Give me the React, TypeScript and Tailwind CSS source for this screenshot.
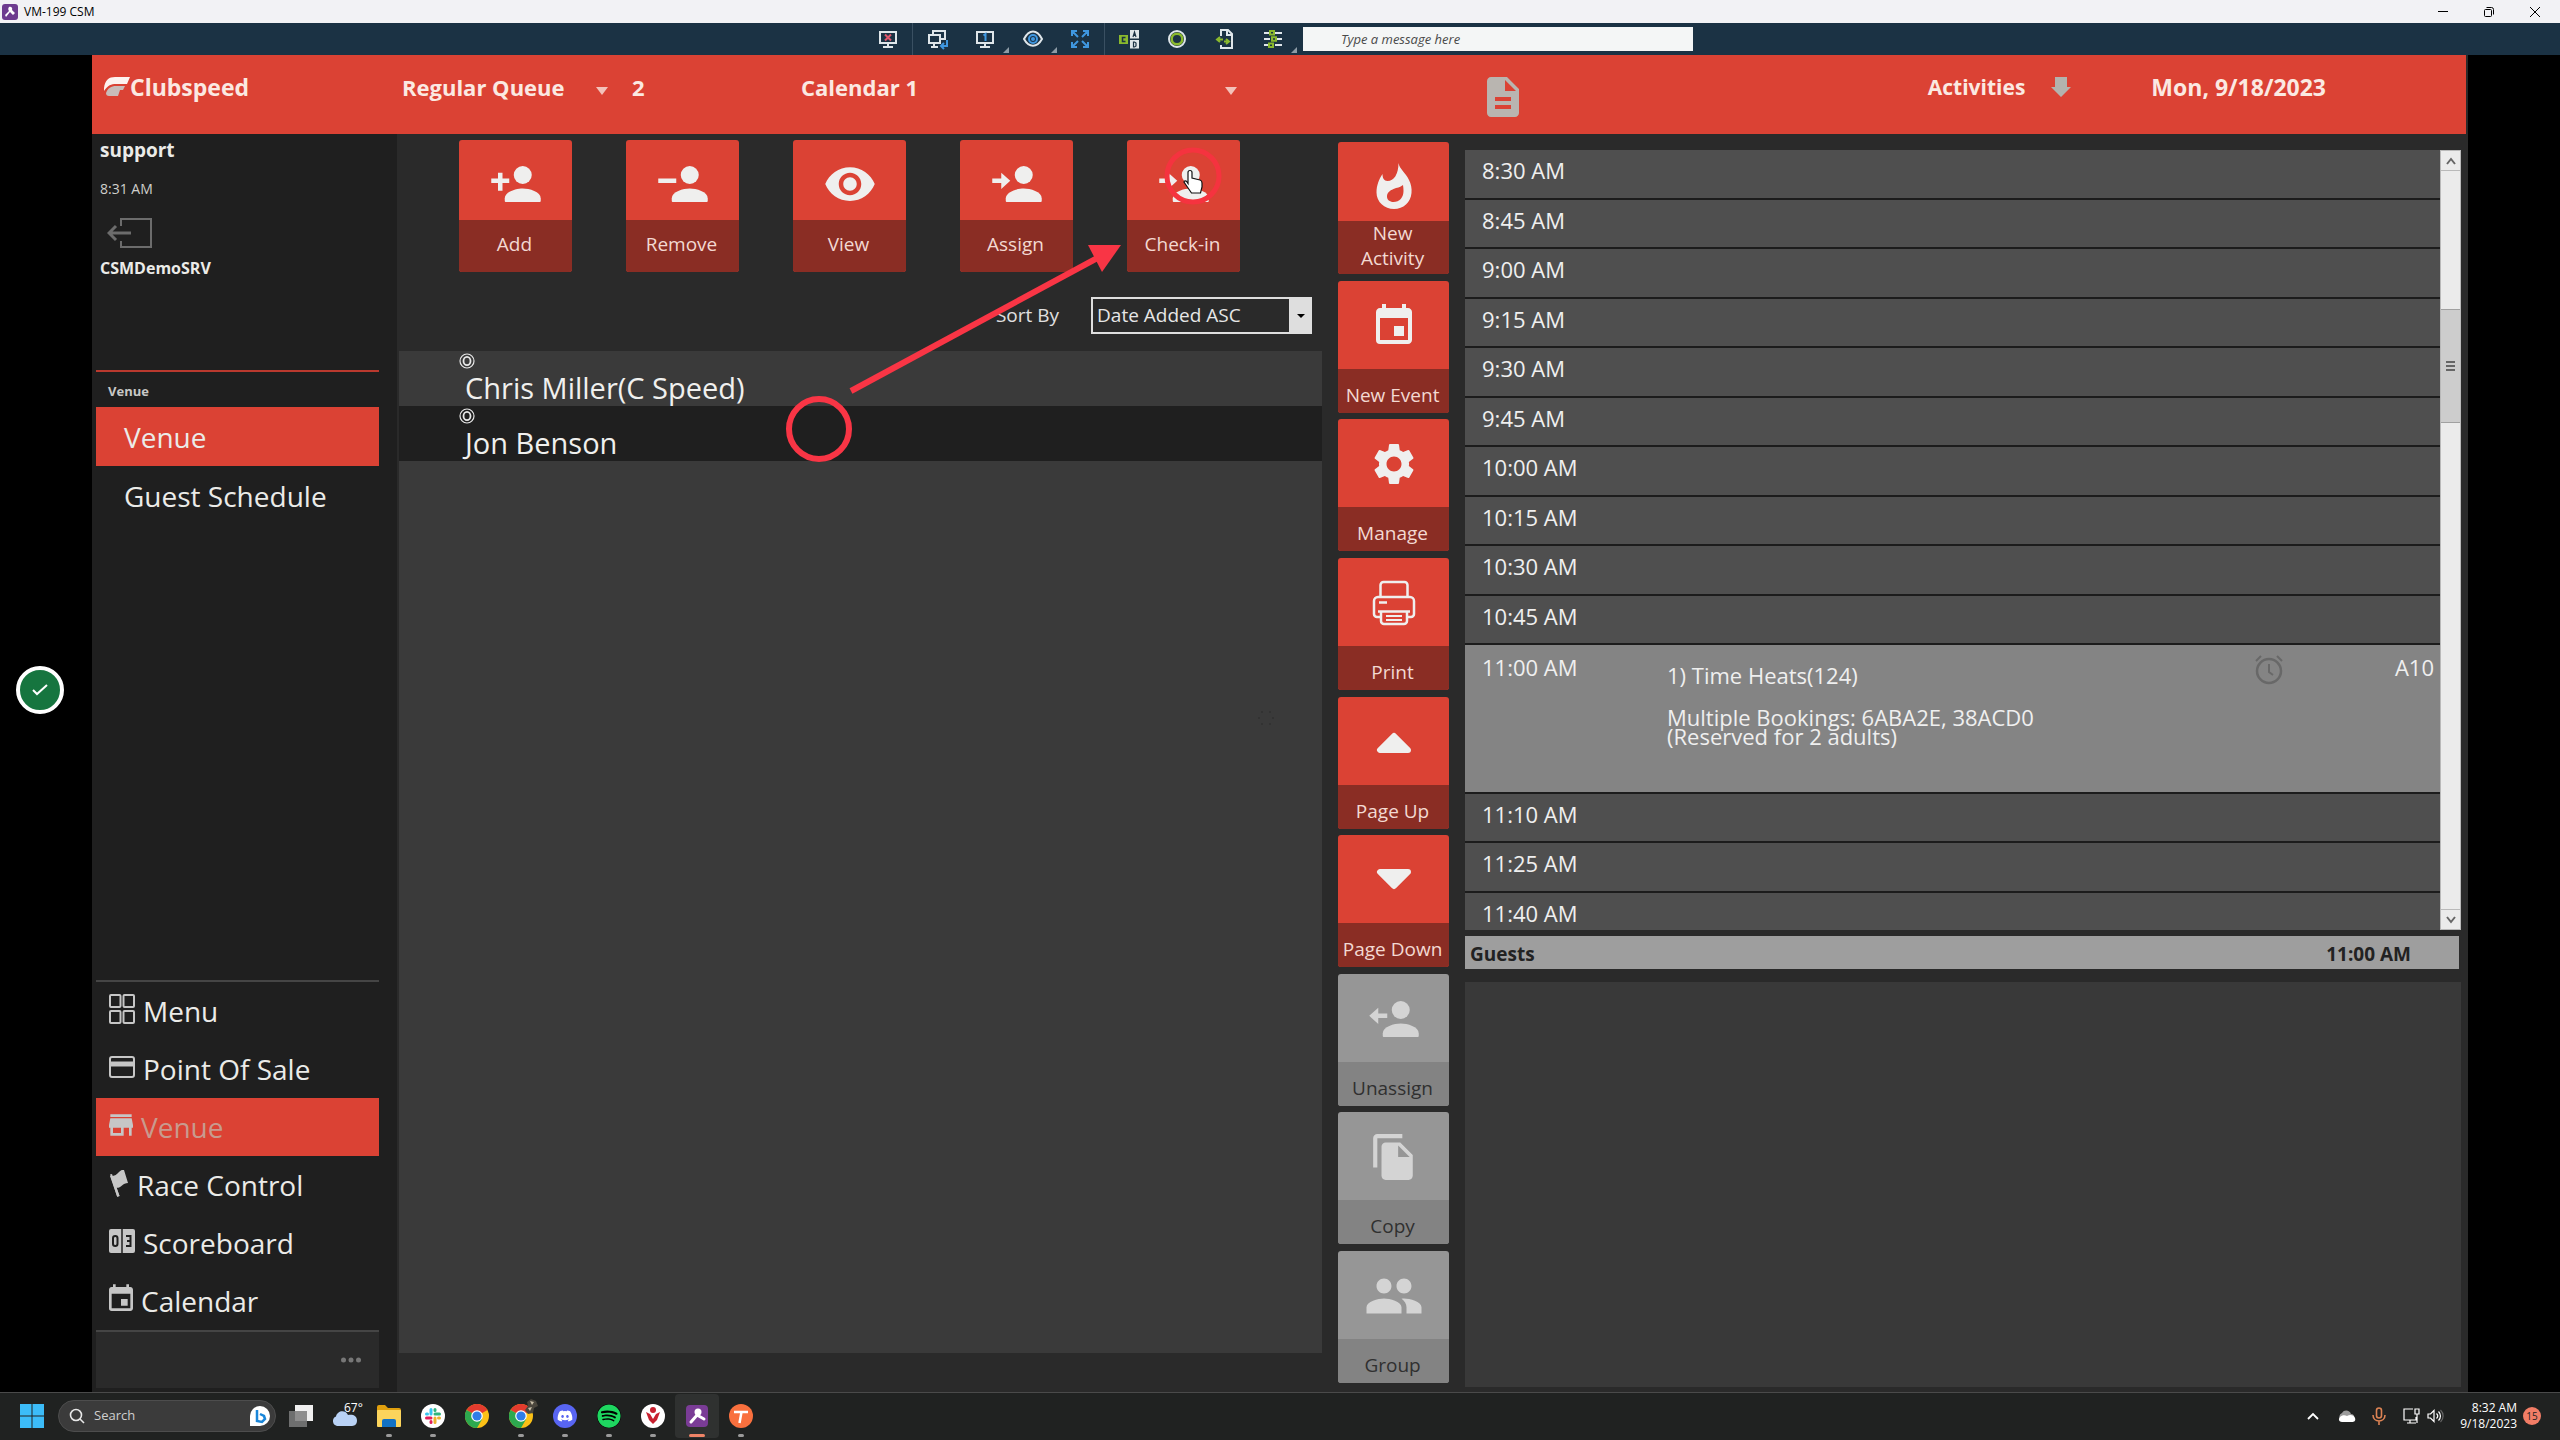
// src/App.tsx
import type { ReactNode } from "react";
import {
    MdVisibility,
    MdEvent,
    MdSettings,
    MdGroup,
    MdFileCopy,
    MdDescription,
    MdStore,
} from "react-icons/md";
import { FaDiscord, FaSpotify } from "react-icons/fa";

type Kind = "add" | "remove" | "in" | "out";

const personMark: Record<Kind, string> = {
    add: "M6 9.6V7H4v2.6H1v2h3V15h2v-3.4h3v-2H6z",
    remove: "M1 9.6h8v2H1z",
    in: "M1 9.6h4V7l4 3.6-4 3.6v-2.6H1z",
    out: "M9 9.6H5V7l-4 3.6 4 3.6v-2.6h4z",
};

function PersonIcon({ kind }: { kind: Kind }) {
    return (
        <svg viewBox="0 0 24 24" className="size-[54px]" fill="currentColor">
            <circle cx="15" cy="8" r="4" />
            <path d="M15 14c-2.9 0-8 1.4-8 4.4v1c0 .4.2.6.6.6h14.8c.4 0 .6-.2.6-.6v-1c0-3-5.1-4.4-8-4.4z" />
            <path d={personMark[kind]} />
        </svg>
    );
}

function FlameIcon() {
    return (
        <svg viewBox="0 0 36 48" className="h-[48px] w-[36px]" fill="currentColor" fillRule="evenodd">
            <path d="M22.5 1c1 6 7 9.500 10.500 17 2 4 3 8 2.500 13C34.600 40.500 27.500 47 18 47S.5 40 .5 30.500C.5 23.500 3 17 6.500 12c0 4 1.500 7 5 7 6.500 0 11-7 11-18zM27 23c-3 2.500-6 2.500-9.500 4-4 1.600-6.500 4-6.500 7.500 0 3.200 2.700 5.500 6.500 5.500 6 0 10-4.500 10-11 0-2-.2-4-.5-6z" />
        </svg>
    );
}

function PrintIcon() {
    return (
        <svg viewBox="0 0 44 46" className="h-[46px] w-[44px]" fill="none" stroke="currentColor" strokeWidth="2.500">
            <path d="M8.500 17V5a3 3 0 0 1 3-3h21a3 3 0 0 1 3 3v12" />
            <path d="M8 37H5a3 3 0 0 1-3-3V21a4 4 0 0 1 4-4h32a4 4 0 0 1 4 4v13a3 3 0 0 1-3 3h-3" />
            <path d="M6 31.500h32M9 32v9a3 3 0 0 0 3 3h20a3 3 0 0 0 3-3v-9M7 22.500h8" />
            <path d="M14 36h16M14 40h16" strokeWidth="2" />
        </svg>
    );
}

function TriangleIcon({ down }: { down?: boolean }) {
    return (
        <svg viewBox="0 0 36 24" className="h-6 w-9" fill="currentColor" stroke="currentColor" strokeWidth="6" strokeLinejoin="round">
            <path d={down ? "M4 4h28L18 18z" : "M4 20h28L18 6z"} />
        </svg>
    );
}

const topActions: { label: string; icon: ReactNode }[] = [
    { label: "Add", icon: <PersonIcon kind="add" /> },
    { label: "Remove", icon: <PersonIcon kind="remove" /> },
    { label: "View", icon: <MdVisibility className="size-[54px]" /> },
    { label: "Assign", icon: <PersonIcon kind="in" /> },
    { label: "Check-in", icon: <PersonIcon kind="in" /> },
];

const sideActions: { label: string; icon: ReactNode; disabled?: boolean }[] = [
    { label: "New Activity", icon: <FlameIcon /> },
    { label: "New Event", icon: <MdEvent className="size-[48px]" /> },
    { label: "Manage", icon: <MdSettings className="size-[50px]" /> },
    { label: "Print", icon: <PrintIcon /> },
    { label: "Page Up", icon: <TriangleIcon /> },
    { label: "Page Down", icon: <TriangleIcon down /> },
    { label: "Unassign", icon: <PersonIcon kind="out" />, disabled: true },
    { label: "Copy", icon: <MdFileCopy className="size-[50px]" />, disabled: true },
    { label: "Group", icon: <MdGroup className="size-[60px]" />, disabled: true },
];

const before = ["8:30 AM", "8:45 AM", "9:00 AM", "9:15 AM", "9:30 AM", "9:45 AM", "10:00 AM", "10:15 AM", "10:30 AM", "10:45 AM"];
const after = ["11:10 AM", "11:25 AM"];

const modules: { label: string; active?: boolean; icon: ReactNode }[] = [
    {
        label: "Menu",
        icon: (
            <svg viewBox="0 0 26 30" className="h-[30px] w-[26px]" fill="none" stroke="currentColor" strokeWidth="2">
                <rect x="1" y="1" width="10.500" height="12" rx="1" />
                <rect x="14.500" y="1" width="10.500" height="12" rx="1" />
                <rect x="1" y="17" width="10.500" height="12" rx="1" />
                <rect x="14.500" y="17" width="10.500" height="12" rx="1" />
            </svg>
        ),
    },
    {
        label: "Point Of Sale",
        icon: (
            <svg viewBox="0 0 26 22" className="h-[22px] w-[26px]" fill="none" stroke="currentColor" strokeWidth="2">
                <rect x="1" y="1" width="24" height="20" rx="2" />
                <path d="M1 8h24" strokeWidth="5" />
            </svg>
        ),
    },
    { label: "Venue", active: true, icon: <MdStore className="-mx-1 size-[32px]" /> },
    {
        label: "Race Control",
        icon: (
            <svg viewBox="0 0 20 28" className="h-[30px] w-[20px]" fill="currentColor">
                <path d="M1 7c4 .5 7-1.500 9-4 1.500-1.800 3-2.300 5-2l4 13c-2.500 0-4.500 1-6 2.500-1.800 1.700-3.500 2.500-5.500 2.300L10.500 27l-2.300.8z" />
                <path d="M1 5.500l2-.6L10.500 27l-2.300.8z" />
            </svg>
        ),
    },
    {
        label: "Scoreboard",
        icon: (
            <svg viewBox="0 0 26 24" className="h-[24px] w-[26px]">
                <rect width="26" height="24" rx="2" fill="currentColor" />
                <path d="M13 0v24" stroke="#1f1f1f" strokeWidth="1.500" />
                <rect x="4" y="7" width="4.500" height="10" rx="2.200" fill="none" stroke="#1f1f1f" strokeWidth="2" />
                <path d="M17 7h4.500v10H17M18 12h3.500" fill="none" stroke="#1f1f1f" strokeWidth="2" />
            </svg>
        ),
    },
    { label: "Calendar", icon: <MdEvent className="-mx-1 size-[32px]" /> },
];

function Tile({ label, icon, disabled, side }: { label: string; icon: ReactNode; disabled?: boolean; side?: boolean }) {
    const tall = label === "New Activity";
    return (
        <button
            type="button"
            disabled={disabled}
            className={`flex h-[132px] flex-col overflow-hidden rounded-[3px] ${side ? "w-full" : "w-[113px]"} ${disabled ? "bg-[#969696] text-[#d4d4d4]" : "bg-[#db4234] text-[#efefee]"}`}
        >
            <span className={`flex w-full items-center justify-center ${side && !tall ? "h-[88px] pt-0.5" : "h-[80px] pt-2"}`}>{icon}</span>
            <span
                className={`flex w-full flex-1 items-center justify-center pr-[18px] pl-4 text-center text-[19px] ${side && !tall ? "pt-2 leading-6 whitespace-nowrap" : "pb-[3px] leading-[25px]"} ${disabled ? "bg-[#838383] text-[#303030]" : "bg-[#8a2d24] text-[#f3d9d2]"}`}
            >
                {label}
            </span>
        </button>
    );
}

function Caret() {
    return (
        <svg viewBox="0 0 12 8" className="pointer-events-none absolute top-4 right-1 h-2 w-3" fill="#f3c2ba">
            <path d="M0 0h12L6 8z" />
        </svg>
    );
}

function TitleBar() {
    return (
        <div className="flex h-[23px] shrink-0 items-center bg-[#f2f2f5] text-black">
            <svg viewBox="0 0 16 16" className="ml-[2px] size-4">
                <rect width="16" height="16" rx="3" fill="#6d3b8f" />
                <path d="M7 3c2-1 4 1 3 3l3 3-2 2-3-3-4 5-1-2 4-4c-1-1-1-3 0-4z" fill="#fff" />
            </svg>
            <span className="ml-1.5 text-[12px]">VM-199 CSM</span>
            <div className="ml-auto flex items-center pr-0.5">
                <button type="button" aria-label="Minimize" className="flex w-[46px] justify-center">
                    <svg viewBox="0 0 12 12" className="size-3" stroke="#000"><path d="M1 5.500h10" /></svg>
                </button>
                <button type="button" aria-label="Restore" className="flex w-[46px] justify-center">
                    <svg viewBox="0 0 12 12" className="size-3" fill="none" stroke="#000">
                        <rect x="1.500" y="3.500" width="7" height="7" rx="1" />
                        <path d="M3.500 1.500h5a2 2 0 0 1 2 2v5" />
                    </svg>
                </button>
                <button type="button" aria-label="Close" className="flex w-[46px] justify-center">
                    <svg viewBox="0 0 12 12" className="size-3" stroke="#000"><path d="M1 1l10 10M11 1L1 11" /></svg>
                </button>
            </div>
        </div>
    );
}

const tools: { name: string; corner?: boolean; sep?: boolean; icon: ReactNode }[] = [
    {
        name: "Disconnect",
        sep: true,
        icon: (
            <>
                <path d="M1 2h16v11H1zM9 13v4M4 17h10" stroke="#dfe6ea" />
                <path d="M6 4.500l6 6M12 4.500l-6 6" stroke="#e0566b" />
            </>
        ),
    },
    {
        name: "Switch screen",
        icon: (
            <>
                <path d="M5 5V1h12v8h-4M1 5h11v8H1zM6 13v3M3 17h7" stroke="#dfe6ea" />
                <path d="M19 10v6h-5M16 13l-3 3 3 3" stroke="#3f97e0" />
            </>
        ),
    },
    {
        name: "Screen 1",
        corner: true,
        icon: (
            <>
                <path d="M1 2h16v11H1zM9 13v4M4 17h10" stroke="#dfe6ea" />
                <path d="M7.500 5.500L9.500 4v7" stroke="#3f97e0" />
            </>
        ),
    },
    {
        name: "View",
        corner: true,
        icon: (
            <>
                <path d="M0 9c5-10 13-10 18 0-5 9-13 9-18 0z" stroke="#dfe6ea" />
                <circle cx="9" cy="9" r="4" stroke="#3f97e0" />
                <circle cx="9" cy="9" r="1" stroke="#3f97e0" />
            </>
        ),
    },
    {
        name: "Full screen",
        sep: true,
        icon: <path d="M1 6V1h5M1 1l6 6M17 6V1h-5M17 1l-6 6M1 12v5h5M1 17l6-6M17 12v5h-5M17 17l-6-6" stroke="#3f97e0" />,
    },
    {
        name: "Ctrl Alt Del",
        icon: (
            <>
                <rect x="-1" y="5" width="9" height="9" fill="#8ab92d" />
                <rect x="10" y="0" width="9" height="8.500" fill="#dfe6ea" />
                <rect x="10" y="10" width="9" height="8.500" fill="#dfe6ea" />
                <path d="M5.500 7.500h-3v4h3" stroke="#1b3244" strokeWidth="1.500" />
                <path d="M13 7l1.500-5L16 7M13.500 5.500h2M13.500 12v5h1l1.500-1v-3l-1.500-1z" stroke="#1b3244" strokeWidth="1.200" />
            </>
        ),
    },
    {
        name: "Reboot",
        icon: (
            <>
                <circle cx="9" cy="9" r="8" stroke="#dfe6ea" />
                <circle cx="9" cy="9" r="5.300" stroke="#8ab92d" strokeWidth="2.500" />
            </>
        ),
    },
    {
        name: "File transfer",
        icon: (
            <>
                <path d="M5 6V0h7l4 4v14H5v-3M11 0v5h5" stroke="#dfe6ea" />
                <path d="M1 9.500h6M8 11.500h5M4 7l-3 2.500L4 12M10 9l3 2.500L10 14" stroke="#8ab92d" />
            </>
        ),
    },
    {
        name: "Settings",
        corner: true,
        icon: (
            <>
                <path d="M0 3h5M11 3h7M0 9h6M13 9h5M0 15h4M11 15h7" stroke="#dfe6ea" />
                <path d="M6 1h4v3.500H6zM8 7.200h4v3.500H8zM5 13.500h4V17H5z" stroke="#8ab92d" />
            </>
        ),
    },
];

function ToolBar() {
    return (
        <div className="flex h-8 shrink-0 items-center justify-center bg-[#1b3244] pr-0.5">
            {tools.map((t) => (
                <button
                    key={t.name}
                    type="button"
                    aria-label={t.name}
                    className={`relative flex h-8 w-12 items-center justify-center ${t.sep ? "border-r border-[#3a5062]" : ""}`}
                >
                    <svg viewBox="-1 -1 21 21" className="size-[21px]" fill="none" strokeWidth="2">{t.icon}</svg>
                    {t.corner && (
                        <svg viewBox="0 0 6 6" className="absolute right-0 bottom-0.5 size-1.5" fill="#8d9ba6"><path d="M6 0v6H0z" /></svg>
                    )}
                </button>
            ))}
            <input
                aria-label="Message"
                placeholder="Type a message here"
                className="ml-[6px] h-6 w-[390px] bg-[#f4f6f6] pl-[38px] text-[13px] italic placeholder:text-[#4a4a4a]"
            />
        </div>
    );
}

function Header() {
    return (
        <header className="mr-0.5 flex h-[79px] shrink-0 items-start bg-[#db4234] pt-4 text-[22px] leading-8 font-bold text-[#fbe9e2]">
            <div className="flex w-[310px] items-center pl-[11px] text-[23px]">
                <svg viewBox="0 0 27 20" className="h-5 w-[27px]">
                    <path d="M1 11C2 3 6 0 12 0h15l-3 7H13c-5 0-8 1-12 7z" fill="#fdf3f0" />
                    <path d="M3 16c2-5 5-7 10-7h9l-2 4h-3l-2 6H6c-2 0-3-1-3-3z" fill="#c9bcb9" />
                </svg>
                <span>Clubspeed</span>
            </div>
            <div className="relative w-[210px]">
                <select aria-label="Queue" className="w-full appearance-none leading-8 font-bold">
                    <option>Regular Queue</option>
                </select>
                <Caret />
            </div>
            <span className="w-[189px] pl-5">2</span>
            <div className="relative w-[440px]">
                <select aria-label="Calendar" className="w-full appearance-none leading-8 font-bold">
                    <option>Calendar 1</option>
                </select>
                <Caret />
            </div>
            <button type="button" aria-label="Notes" className="mt-0.5 ml-[238px] text-[#b9b5b0]">
                <MdDescription className="size-[48px]" />
            </button>
            <div className="mr-[140px] ml-auto flex items-center">
                <span className="text-[21px]">Activities</span>
                <svg viewBox="0 0 20 20" className="ml-[26px] h-5 w-5" fill="#b3b3ae">
                    <path d="M4 0h12v10h4L10 20 0 10h4z" />
                </svg>
                <span className="ml-20 text-[23px]">Mon, 9/18/2023</span>
            </div>
        </header>
    );
}

function Sidebar() {
    return (
        <aside className="flex w-[305px] shrink-0 flex-col bg-[#1f1f1f] pr-[18px] pb-1 pl-1 text-[#ebebe8]">
            <div className="flex h-[236px] flex-col pl-1">
                <span className="text-[19px] leading-8 font-bold">support</span>
                <span className="mt-3 text-[14px] leading-[22px] text-[#cfcfcc]">8:31 AM</span>
                <button type="button" aria-label="Log out" className="mt-[18px] ml-[7px] w-[46px]">
                    <svg viewBox="0 0 46 30" className="h-[30px] w-[46px]" fill="none" stroke="#6c6c6c" strokeWidth="2">
                        <path d="M14 8V1h30v28H14v-6" />
                        <path d="M24 15H2M9 8l-7 7 7 7" strokeWidth="3" />
                    </svg>
                </button>
                <span className="mt-1 text-[16px] leading-8 font-bold">CSMDemoSRV</span>
            </div>
            <div className="flex h-[37px] items-center border-t-2 border-[#b9392e] pt-1 pl-3 text-[13px] font-bold text-[#c8c8c6]">Venue</div>
            <button type="button" className="h-[59px] bg-[#db4234] pl-7 text-left text-[28px]">Venue</button>
            <button type="button" className="h-[59px] pl-7 text-left text-[28px]">Guest Schedule</button>
            <nav className="mt-auto border-t-2 border-[#454545]">
                {modules.map((m) => (
                    <button
                        key={m.label}
                        type="button"
                        className={`flex h-[58px] w-full items-center gap-2 pl-[13px] text-[28px] ${m.active ? "bg-[#db4234] text-[#c89a8e]" : ""}`}
                    >
                        <span className="-mt-1 text-[#c6c6c6]">{m.icon}</span>
                        {m.label}
                    </button>
                ))}
            </nav>
            <div className="flex h-[58px] items-center justify-end border-t-2 border-[#454545] bg-[#2a2a2a] pr-[18px]">
                <button type="button" aria-label="More">
                    <svg viewBox="0 0 20 6" className="h-1.5 w-5" fill="#777">
                        <circle cx="2.500" cy="3" r="2.500" />
                        <circle cx="10" cy="3" r="2.500" />
                        <circle cx="17.500" cy="3" r="2.500" />
                    </svg>
                </button>
            </div>
        </aside>
    );
}

function QueueRow({ name, dark }: { name: string; dark?: boolean }) {
    return (
        <li className={`h-[55px] ${dark ? "bg-[#1f1f1f]" : ""}`}>
            <svg viewBox="0 0 16 16" className="ml-[60px] h-[18px] w-4 pt-0.5" fill="none" stroke="#e8e8e8" strokeWidth="1.200">
                <circle cx="8" cy="8" r="7" />
                <ellipse cx="8" cy="8" rx="3.500" ry="4.200" strokeWidth="1.800" />
            </svg>
            <div className="pl-[66px] text-[29px] leading-[38px]">{name}</div>
        </li>
    );
}

function QueuePanel() {
    return (
        <section className="relative flex min-w-0 flex-[926_1_0%] flex-col text-[#f0f0ee]">
            <div className="flex gap-[54px] pt-[6px] pl-[62px]">
                {topActions.map((a) => (
                    <Tile key={a.label} label={a.label} icon={a.icon} />
                ))}
            </div>
            <div className="mt-[25px] mr-[10px] flex items-center justify-end text-[19px]">
                <label htmlFor="sort" className="mr-8 text-[#e0e0e0]">Sort By</label>
                <div className="relative">
                    <select id="sort" className="h-[37px] w-[221px] appearance-none border-2 border-[#dedede] bg-[#2a2a2a] pl-1 text-[#e6e6e6]">
                        <option>Date Added ASC</option>
                    </select>
                    <span className="pointer-events-none absolute top-0 right-0 flex h-[37px] w-[23px] items-center justify-center bg-[#dedede]">
                        <svg viewBox="0 0 8 4" className="h-1 w-2"><path d="M0 0h8L4 4z" /></svg>
                    </span>
                </div>
            </div>
            <ul className="mt-[17px] mb-[39px] ml-0.5 flex-1 bg-[#3a3a3a]">
                <QueueRow name="Chris Miller(C Speed)" />
                <QueueRow name="Jon Benson" dark />
            </ul>

            {/* pointer, click ring and drag marker over the queue */}
            <svg viewBox="0 0 360 340" className="pointer-events-none absolute top-0 left-[380px] h-[340px] w-[360px]" fill="none">
                <circle cx="42" cy="295" r="30" stroke="#f93545" strokeWidth="6" />
                <path d="M74 257L324 122" stroke="#f93545" strokeWidth="6" />
                <path d="M311 111h33l-19 27z" fill="#f93545" />
            </svg>
            <svg viewBox="0 0 60 60" className="pointer-events-none absolute top-[12px] left-[766px] size-[60px]" fill="none">
                <circle cx="30" cy="30" r="26" stroke="#f5333f" strokeWidth="5" />
                <path
                    d="M25 26.500a2 2 0 0 1 4 0v5.500l8 2c1.500.4 2 1.500 2 3v4l-1.500 6h-9L23 39l-2-3c0-1.500 2-1.500 3 0l1 1.500z"
                    fill="#fff"
                    stroke="#111"
                    strokeWidth="1.200"
                />
            </svg>
            <svg viewBox="0 0 16 16" className="pointer-events-none absolute top-[576px] left-[861px] size-4" fill="#303030">
                <circle cx="4" cy="2" r="1" /><circle cx="12" cy="2" r="1" />
                <circle cx="1" cy="8" r="1" /><circle cx="15" cy="8" r="1" />
                <circle cx="4" cy="14" r="1" /><circle cx="12" cy="14" r="1" />
            </svg>
        </section>
    );
}

function Slot({ time, last }: { time: string; last?: boolean }) {
    return (
        <li className={`min-h-0 overflow-hidden ${last ? "flex-[3_1_0%]" : "flex-[4_1_0%]"}`}>
            <div className={`h-full pt-1 pl-[17px] leading-8 ${last ? "" : "border-b-2 border-[#1c1c1c]"}`}>{time}</div>
        </li>
    );
}

function Schedule() {
    return (
        <section className="flex min-w-0 flex-[997_1_0%] flex-col pt-4 pb-[5px]">
            <div className="flex h-[780px]">
                <ul className="flex min-w-0 flex-1 flex-col bg-[#4f4f4f] text-[22px] text-[#efefef]">
                    {before.map((t) => (
                        <Slot key={t} time={t} />
                    ))}
                    <li className="min-h-0 flex-[12_1_0%] overflow-hidden">
                        <div className="flex h-full border-b-2 border-[#1c1c1c] bg-[#848484] pt-[6px] pr-[6px] pl-[17px] leading-8">
                            <span className="w-[185px]">11:00 AM</span>
                            <div className="pt-2">
                                <p>1) Time Heats(124)</p>
                                <p className="mt-[17px] leading-[19px]">
                                    Multiple Bookings: 6ABA2E, 38ACD0
                                    <br />
                                    (Reserved for 2 adults)
                                </p>
                            </div>
                            <svg viewBox="0 0 28 30" className="mr-[112px] ml-auto h-[34px] w-[28px] pt-1" fill="none" stroke="#686868" strokeWidth="2.500">
                                <circle cx="14" cy="16" r="12" />
                                <path d="M14 9v8l4 3M1 6l5-5M27 6l-5-5" strokeWidth="2" />
                            </svg>
                            <span>A10</span>
                        </div>
                    </li>
                    {after.map((t) => (
                        <Slot key={t} time={t} />
                    ))}
                    <Slot time="11:40 AM" last />
                </ul>
                {/* scroll bar */}
                <div className="flex w-[21px] flex-col border border-[#b9b9b9] bg-[#ebebeb]">
                    <button type="button" aria-label="Scroll up" className="flex h-5 items-center justify-center border-b border-[#b9b9b9]">
                        <svg viewBox="0 0 10 8" className="h-2 w-2.5" fill="none" stroke="#666" strokeWidth="2"><path d="M1 7l4-5 4 5" /></svg>
                    </button>
                    <div className="h-[138px]" />
                    <div className="flex h-[114px] flex-col items-center justify-center gap-[2px] border-y border-[#a0a0a0] bg-[#cdcdcd]">
                        <i className="h-[2px] w-[9px] bg-[#666]" />
                        <i className="h-[2px] w-[9px] bg-[#666]" />
                        <i className="h-[2px] w-[9px] bg-[#666]" />
                    </div>
                    <button type="button" aria-label="Scroll down" className="mt-auto flex h-5 items-center justify-center border-t border-[#b9b9b9]">
                        <svg viewBox="0 0 10 8" className="h-2 w-2.5" fill="none" stroke="#666" strokeWidth="2"><path d="M1 1l4 5 4-5" /></svg>
                    </button>
                </div>
            </div>
            <div className="mt-[6px] mr-0.5 flex h-[33px] items-center justify-between bg-[#9e9e9e] pt-1 pr-12 pl-[5px] text-[19px] font-bold text-[#222]">
                <span>Guests</span>
                <span>11:00 AM</span>
            </div>
            <div className="mt-[13px] flex-1 bg-[#393939]" />
        </section>
    );
}

function ChromeIcon() {
    return (
        <svg viewBox="0 0 24 24" className="size-6">
            <circle cx="12" cy="12" r="12" fill="#fbc116" />
            <path d="M12 12L1.600 6A12 12 0 0 1 22.400 6z" fill="#e33b2e" />
            <path d="M1.600 6A12 12 0 0 0 12 24l5.200-9L12 12z" fill="#2da94f" />
            <circle cx="12" cy="12" r="5.800" fill="#fff" />
            <circle cx="12" cy="12" r="4.600" fill="#2f7de9" />
        </svg>
    );
}

const apps: { name: string; dot?: boolean; active?: boolean; icon: ReactNode }[] = [
    {
        name: "Task view",
        icon: (
            <svg viewBox="0 0 24 22" className="h-[22px] w-6">
                <rect x="6" width="18" height="16" fill="#f0f0f0" />
                <rect y="6" width="18" height="16" fill="#7d7d7d" fillOpacity=".85" />
            </svg>
        ),
    },
    {
        name: "Weather",
        icon: (
            <span className="relative">
                <svg viewBox="0 0 26 24" className="h-6 w-[26px]" fill="#b9d2f5">
                    <path d="M5 22a5 5 0 0 1-1-9.500C5 7 13 5 16 11c5-1 9 1 9 5.500S22 22 19 22z" />
                </svg>
                <span className="absolute -top-1 left-3 text-[12px] leading-4 text-white">67°</span>
            </span>
        ),
    },
    {
        name: "Explorer",
        dot: true,
        icon: (
            <svg viewBox="0 0 24 22" className="h-[22px] w-6">
                <path d="M0 2a2 2 0 0 1 2-2h6l3 3h11a2 2 0 0 1 2 2v3H0z" fill="#e0a00e" />
                <rect y="5" width="24" height="17" rx="1" fill="#fbd45c" />
                <path d="M5 22v-6a2 2 0 0 1 2-2h10a2 2 0 0 1 2 2v6z" fill="#1272c4" />
            </svg>
        ),
    },
    {
        name: "Slack",
        dot: true,
        icon: (
            <svg viewBox="0 0 24 24" className="size-6" strokeWidth="3" strokeLinecap="round">
                <circle cx="12" cy="12" r="12" fill="#fff" />
                <path d="M10 5.500V10M5.500 10h1" stroke="#36c5f0" />
                <path d="M18.500 10H14M14 5.500v1" stroke="#2eb67d" />
                <path d="M14 18.500V14M18.500 14h-1" stroke="#ecb22e" />
                <path d="M5.500 14H10M10 18.500v-1" stroke="#e01e5a" />
            </svg>
        ),
    },
    { name: "Chrome", icon: <ChromeIcon /> },
    {
        name: "Chrome profile",
        dot: true,
        icon: (
            <span className="relative">
                <ChromeIcon />
                <svg viewBox="0 0 16 16" className="absolute -top-1.5 -right-1.5 size-4">
                    <path d="M8 1l5 2 2 5-4 2-1 5-5 1-3-4 3-4-1-4z" fill="#4a463d" />
                    <path d="M7 3l4 1-2 3zM5 10l4-1-2 4z" fill="#c9bfa8" />
                </svg>
            </span>
        ),
    },
    {
        name: "Discord",
        dot: true,
        icon: <span className="flex size-6 items-center justify-center rounded-full bg-[#5865f2] text-white"><FaDiscord className="size-4" /></span>,
    },
    { name: "Spotify", dot: true, icon: <FaSpotify className="size-6 rounded-full bg-black text-[#1ed760]" /> },
    {
        name: "Vivint",
        dot: true,
        icon: (
            <svg viewBox="0 0 24 24" className="size-6">
                <circle cx="12" cy="12" r="12" fill="#fff" />
                <circle cx="12" cy="6" r="3" fill="#c8202f" />
                <path d="M5 8l4 2 3 5 3-5 4-2-3 8-4 4-4-4z" fill="#c8202f" />
            </svg>
        ),
    },
    {
        name: "Splashtop",
        active: true,
        icon: (
            <svg viewBox="0 0 24 24" className="size-6">
                <rect x="1" y="1" width="22" height="22" rx="4" fill="#7a3c96" />
                <circle cx="13" cy="8" r="3.500" fill="#fff" />
                <path d="M13 10L6 18M12 11l7 4" stroke="#fff" strokeWidth="3" strokeLinecap="round" />
            </svg>
        ),
    },
    {
        name: "Teamwork",
        dot: true,
        icon: (
            <svg viewBox="0 0 24 24" className="size-6">
                <circle cx="12" cy="12" r="12" fill="#f9703e" />
                <path d="M5 8h14M12.500 8l-2 11" stroke="#fff" strokeWidth="2.500" />
            </svg>
        ),
    },
];

function TaskBar() {
    return (
        <footer className="flex h-[48px] shrink-0 items-center border-t border-[#4a4a4a] bg-[#202221] pb-px text-white">
            <button type="button" aria-label="Start" className="ml-5">
                <svg viewBox="0 0 24 24" className="size-6" fill="#3cbcf8">
                    <path d="M0 0h11.500v11.500H0zM12.500 0H24v11.500H12.500zM0 12.500h11.500V24H0zM12.500 12.500H24V24H12.500z" />
                </svg>
            </button>
            <label className="ml-[14px] flex h-8 w-[218px] items-center rounded-full border border-[#4d4d4d] bg-[#3b3b3b] pr-[5px] pl-[10px]">
                <svg viewBox="0 0 16 16" className="size-4" fill="none" stroke="#e8e8e8" strokeWidth="1.600">
                    <circle cx="7" cy="7" r="5.500" />
                    <path d="M11 11l4 4" />
                </svg>
                <input aria-label="Search" placeholder="Search" className="ml-[9px] w-0 min-w-0 flex-1 text-[13px] placeholder:text-[#cfcfcf]" />
                <svg viewBox="0 0 20 20" className="size-5">
                    <path d="M10 0a10 10 0 1 1 0 20H0V10A10 10 0 0 1 10 0z" fill="#fff" />
                    <path d="M7 4v11l5 1 3-3-1-3-4-2" fill="none" stroke="#1a86d9" strokeWidth="2.500" />
                </svg>
            </label>
            <div className="ml-[3px] flex">
                {apps.map((a) => (
                    <button
                        key={a.name}
                        type="button"
                        aria-label={a.name}
                        className={`relative flex h-11 w-11 items-center justify-center ${a.active ? "rounded bg-[#2f3130]" : ""}`}
                    >
                        {a.icon}
                        {a.dot && <i className="absolute bottom-[1px] h-[3px] w-[6px] rounded-full bg-[#9a9a9a]" />}
                        {a.active && <i className="absolute bottom-[1px] h-[3px] w-4 rounded-full bg-[#ef8467]" />}
                    </button>
                ))}
            </div>
            <div className="mr-[19px] ml-auto flex items-center">
                <svg viewBox="0 0 12 8" className="h-2 w-3" fill="none" stroke="#fff" strokeWidth="1.800"><path d="M1 7l5-5 5 5" /></svg>
                <svg viewBox="0 0 18 12" className="ml-[19px] h-3 w-[18px]">
                    <path d="M3 10a4 4 0 0 1 1-7c2-4 8-3 9 1 3 0 4 3 3 5z" fill="#9b9b9b" />
                    <path d="M2 7c2-2 5-2 7-1 3-2 7-1 8 2s-1 4-3 4H4c-3 0-4-3-2-5z" fill="#fff" />
                </svg>
                <svg viewBox="0 0 14 18" className="ml-4 h-[18px] w-[14px]" fill="none" stroke="#dc8354" strokeWidth="1.600">
                    <rect x="4.500" y="1" width="5" height="10" rx="2.500" />
                    <path d="M1 8c0 8 12 8 12 0M7 14v4" />
                </svg>
                <svg viewBox="0 0 17 16" className="ml-[17px] h-4 w-[17px]" fill="none" stroke="#fff" strokeWidth="1.200">
                    <path d="M10 1H1v11h12V9M4 15h9M7 12v3M12 1h4v5h-4zM14 6v9" />
                </svg>
                <svg viewBox="0 0 17 14" className="ml-[7px] h-[14px] w-[17px]" fill="none" stroke="#fff" strokeWidth="1.200">
                    <path d="M1 5h2.500L7 1.500v11L3.500 9H1zM9.500 4.500c1.500 1.500 1.500 3.500 0 5M11.500 2.500c2.600 2.600 2.600 6.400 0 9" />
                    <path d="M13.500 1c3.500 3.500 3.500 8.500 0 12" stroke="#666" />
                </svg>
                <div className="ml-4 text-right text-[12px] leading-4">
                    <div>8:32 AM</div>
                    <div>9/18/2023</div>
                </div>
                <span className="ml-[6px] flex size-[18px] items-center justify-center rounded-full bg-[#f27d66] text-[10px] text-[#222]">15</span>
            </div>
        </footer>
    );
}

export default function App() {
    return (
        <div className="relative flex h-screen flex-col overflow-hidden bg-black font-['Open_Sans','Noto_Sans',sans-serif]">
            <TitleBar />
            <ToolBar />
            <div className="mx-[92px] flex min-h-0 flex-1 flex-col bg-[#2a2a2a]">
                <Header />
                <main className="flex min-h-0 flex-1 pr-[7px]">
                    <Sidebar />
                    <QueuePanel />
                    <div className="mx-4 flex w-[111px] shrink-0 flex-col justify-between pt-2 pb-[9px]">
                        {sideActions.map((a) => (
                            <Tile key={a.label} label={a.label} icon={a.icon} disabled={a.disabled} side />
                        ))}
                    </div>
                    <Schedule />
                </main>
            </div>
            <TaskBar />
            {/* status badge at the left edge */}
            <div className="absolute top-[666px] left-4 flex size-12 items-center justify-center rounded-full border-4 border-white bg-[#16753f]">
                <svg viewBox="0 0 16 12" className="h-3 w-4" fill="none" stroke="#fff" strokeWidth="2"><path d="M1 6l4 4L15 1" /></svg>
            </div>
        </div>
    );
}
